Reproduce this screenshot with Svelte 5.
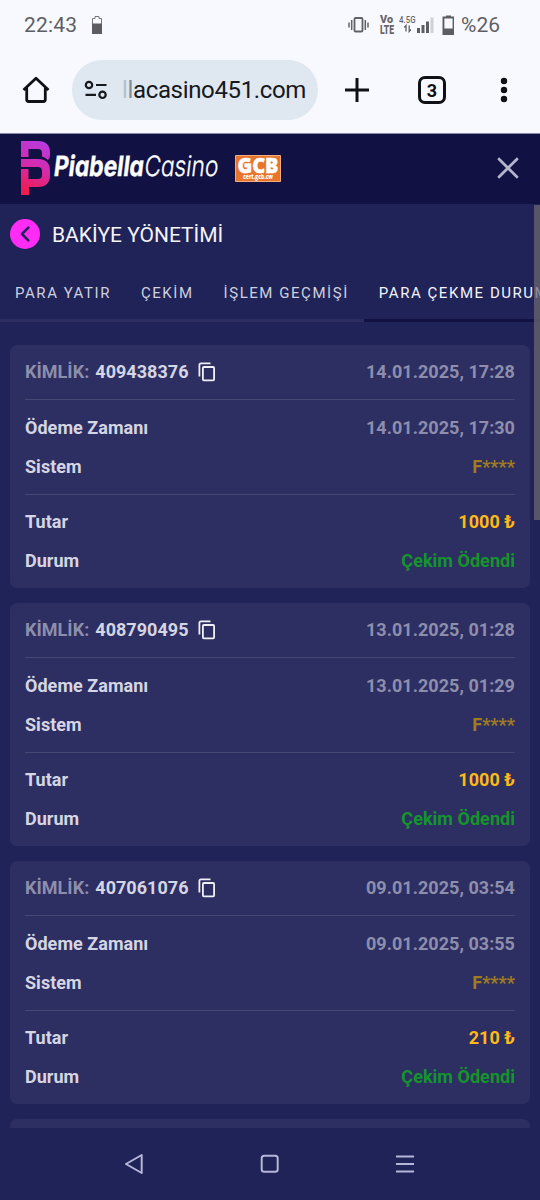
<script lang="ts">
  interface Tab {
    id: string;
    label: string;
  }

  interface Withdrawal {
    id: string;
    createdAt: string;
    paidAt: string;
    system: string;
    amount: string;
    status: string;
  }

  const tabs: Tab[] = [
    { id: 'deposit', label: 'PARA YATIR' },
    { id: 'withdraw', label: 'ÇEKİM' },
    { id: 'history', label: 'İŞLEM GEÇMİŞİ' },
    { id: 'status', label: 'PARA ÇEKME DURUMU' },
  ];

  const withdrawals: Withdrawal[] = [
    { id: '409438376', createdAt: '14.01.2025, 17:28', paidAt: '14.01.2025, 17:30', system: 'F****', amount: '1000 ₺', status: 'Çekim Ödendi' },
    { id: '408790495', createdAt: '13.01.2025, 01:28', paidAt: '13.01.2025, 01:29', system: 'F****', amount: '1000 ₺', status: 'Çekim Ödendi' },
    { id: '407061076', createdAt: '09.01.2025, 03:54', paidAt: '09.01.2025, 03:55', system: 'F****', amount: '210 ₺', status: 'Çekim Ödendi' },
  ];

  let activeTab = $state('status');
</script>

<div class="phone">
  <div class="status-bar">
    <span class="clock">22:43</span>
    <svg class="battery-left" width="12" height="20" viewBox="0 0 12 20">
      <path d="M1.500 3.500h2.500v-2h4v2h2.500v15h-9z" fill="none" stroke="#77777b" />
      <path d="M1 8.500h10V19H1z" fill="#5d5d61" />
    </svg>
    <svg class="signals" width="110" height="24" viewBox="0 0 110 24">
      <g fill="none" stroke="#626266" stroke-width="1.500">
        <rect x="10.500" y="5" width="8" height="13.500" rx="1" stroke-width="1.800" />
        <path d="M7.700 7v10M5 9.500v5M21.300 7v10M24 9.500v5" />
      </g>
      <g fill="#66666a" font-family="Roboto, sans-serif">
        <text x="36" y="10" font-size="11" font-weight="900" textLength="13" lengthAdjust="spacingAndGlyphs">Vo</text>
        <text x="36" y="20.500" font-size="12" font-weight="900" textLength="14" lengthAdjust="spacingAndGlyphs">LTE</text>
        <text x="55" y="9.800" font-size="8.500" font-weight="500" textLength="16.500" lengthAdjust="spacingAndGlyphs">4.5G</text>
      </g>
      <path d="M62 18.500v-6l-1.700 2M65.200 12.500v6l1.700-2" fill="none" stroke="#626266" stroke-width="1.300" />
      <g fill="#5d5d61">
        <path d="M73 15h3v5h-3zM77.500 12h3v8h-3zM82 8.500h3V20h-3z" />
        <path d="M86.500 4.500h3V20h-3z" fill="#cfcfd4" />
        <path d="M98.500 3.500h3.500V2.500h5v1h3.500V22h-12zM100.400 5.500v10h8.200v-10z" fill-rule="evenodd" />
      </g>
    </svg>
    <span class="percent">%26</span>
  </div>

  <div class="browser-bar">
    <svg class="home" width="30" height="30" viewBox="0 0 30 30" fill="none" stroke="#101114" stroke-width="2.800" stroke-linejoin="round">
      <path d="M2.500 15 15 3.300 27.500 15M5.700 12.500v12q0 2 2 2h14.600q2 0 2-2v-12" />
    </svg>
    <div class="url">
      <svg width="24" height="20" viewBox="0 0 24 20" fill="none" stroke="#16191d" stroke-width="2.200">
        <circle cx="5" cy="5" r="3.200" />
        <circle cx="18.500" cy="14.800" r="3.200" />
        <path d="M12 5h10.500M1.500 14.800H12" />
      </svg>
      <span class="address"><span class="faded">l</span><span class="half">l</span>acasino451.com</span>
    </div>
    <svg class="plus" width="26" height="26" viewBox="0 0 26 26" stroke="#101114" stroke-width="3">
      <path d="M1 13h24M13 1v24" />
    </svg>
    <div class="tab-count">3</div>
    <svg class="dots" width="8" height="26" viewBox="0 0 8 26" fill="#101114">
      <circle cx="4" cy="4" r="3.200" /><circle cx="4" cy="13" r="3.200" /><circle cx="4" cy="22" r="3.200" />
    </svg>
  </div>

  <header class="site-header">
    <svg class="logo" width="200" height="56" viewBox="0 0 200 56">
      <defs>
        <linearGradient id="brand" gradientUnits="userSpaceOnUse" x1="26" y1="2" x2="6" y2="50">
          <stop offset="0" stop-color="#b83be0" />
          <stop offset="0.500" stop-color="#d42bae" />
          <stop offset="1" stop-color="#ee1c50" />
        </linearGradient>
      </defs>
      <g fill="url(#brand)">
        <path d="M1 0h17q12 0 12 12v2q0 3-2 5-3-3-6-3.500V12q0-4-4-4H8.500v8H1z" />
        <path d="M1 18h17q12 0 12 12v4q0 12-12 12H9v8H1V28h7.500v10H18q4 0 4-4v-4q0-4-4-4H1z" />
      </g>
      <g class="wordmark" fill="#fff" stroke="#fff" transform="translate(0 34.500) skewX(-7)">
        <text x="33" y="0" font-size="28" font-weight="700" stroke-width=".4" textLength="90" lengthAdjust="spacingAndGlyphs">Piabella</text>
        <text x="123.500" y="0.500" font-size="28" font-weight="300" stroke-width=".3" textLength="74" lengthAdjust="spacingAndGlyphs">Casino</text>
      </g>
    </svg>
    <svg class="gcb" width="46" height="27" viewBox="0 0 46 27">
      <path d="M.5.500h45v26H.5z" fill="#e8752b" stroke="#f0ad82" />
      <g fill="#fff" font-family="'Open Sans', sans-serif" font-weight="800">
        <text x="2.500" y="18" font-size="20.500" stroke="#fff" stroke-width=".5" textLength="41" lengthAdjust="spacingAndGlyphs">GCB</text>
        <text x="8" y="24.300" font-size="6" textLength="30" lengthAdjust="spacingAndGlyphs">cert.gcb.cw</text>
      </g>
    </svg>
    <svg class="close" width="22" height="22" viewBox="0 0 22 22" stroke="#b4b4cc" stroke-width="2.700">
      <path d="M1.200 1.200l19.600 19.600M20.800 1.200L1.200 20.800" />
    </svg>
  </header>

  <main class="content">
    <div class="page-title">
      <span class="back">
        <svg width="10" height="16" viewBox="0 0 10 16" fill="none" stroke="#22245c" stroke-width="2.600" stroke-linecap="round" stroke-linejoin="round">
          <path d="M8.300 1.700 2 8l6.300 6.300" />
        </svg>
      </span>
      <h1>BAKİYE YÖNETİMİ</h1>
    </div>

    <div class="tabs" role="tablist">
      {#each tabs as tab}
        <button
          type="button"
          role="tab"
          class="tab"
          class:active={activeTab === tab.id}
          aria-selected={activeTab === tab.id}
          onclick={() => (activeTab = tab.id)}
        >
          {tab.label}
        </button>
      {/each}
    </div>

    <div class="cards">
      {#each withdrawals as item}
        <article class="card">
          <div class="card-head">
            <span class="muted">KİMLİK:</span>
            <span class="card-id">{item.id}</span>
            <svg width="18" height="20" viewBox="0 0 18 20" fill="none" stroke="#f0f0f8" stroke-width="1.800">
              <path d="M1.400 14.500V3Q1.400 1.400 3 1.400h9.500" />
              <rect x="4.900" y="5" width="11.200" height="13.300" rx="1" />
            </svg>
            <span class="muted date">{item.createdAt}</span>
          </div>
          <div class="group">
            <div class="row"><span>Ödeme Zamanı</span><span class="muted">{item.paidAt}</span></div>
            <div class="row"><span>Sistem</span><span class="system">{item.system}</span></div>
          </div>
          <div class="group">
            <div class="row"><span>Tutar</span><span class="amount">{item.amount}</span></div>
            <div class="row"><span>Durum</span><span class="paid">{item.status}</span></div>
          </div>
        </article>
      {/each}
      <article class="card next"></article>
    </div>
    <div class="scrollbar"></div>
  </main>

  <nav class="nav-bar">
    <svg width="20" height="22" viewBox="0 0 20 22"><path d="M17.700 2v18L2 11z" /></svg>
    <svg width="20" height="20" viewBox="0 0 20 20"><rect x="1.700" y="1.700" width="16" height="16" rx="2.500" /></svg>
    <svg width="20" height="20" viewBox="0 0 20 20"><path d="M1 2.500h18M1 10h18M1 17.500h18" /></svg>
  </nav>
</div>

<style>
  :global(body) {
    background: #202357;
  }

  .phone {
    display: flex;
    flex-direction: column;
    width: 540px;
    height: 1200px;
    overflow: hidden;
    background: #202357;
    font-family: Roboto, sans-serif;
  }

  /* Android status bar */
  .status-bar {
    display: flex;
    align-items: center;
    height: 50px;
    box-sizing: border-box;
    padding: 0 40px 0 24px;
    background: #f8f9ff;
    color: #5f5f63;
    font-size: 21px;
  }

  .clock {
    width: 67px;
    letter-spacing: 0.2px;
  }

  .signals {
    margin-left: auto;
    margin-right: 7px;
  }

  /* Chrome toolbar */
  .browser-bar {
    display: flex;
    align-items: center;
    height: 84px;
    box-sizing: border-box;
    padding: 0 32px 3px 21px;
    background: #f8f9ff;
    border-bottom: 1px solid #8b8ca6;
  }

  .url {
    display: flex;
    align-items: center;
    width: 246px;
    height: 60px;
    box-sizing: border-box;
    margin-left: 21px;
    padding-left: 12px;
    border-radius: 30px;
    background: #dfe7f0;
  }

  .address {
    margin-left: 14px;
    color: #16191d;
    font-size: 24px;
    letter-spacing: -0.35px;
    white-space: nowrap;
  }

  .faded {
    color: #b9c0c8;
  }

  .half {
    color: #858c94;
  }

  .plus {
    margin-left: 26px;
  }

  .tab-count {
    display: flex;
    align-items: center;
    justify-content: center;
    width: 28px;
    height: 28px;
    box-sizing: border-box;
    margin-left: 48px;
    border: 3px solid #101114;
    border-radius: 7px;
    color: #101114;
    font-size: 18px;
    font-weight: 700;
  }

  .dots {
    margin-left: auto;
  }

  /* Site header */
  .site-header {
    display: flex;
    align-items: center;
    height: 70px;
    box-sizing: border-box;
    padding: 0 21px 0 20px;
    background: #111143;
  }

  /* cv11 is Inter's single-storey a */
  .wordmark {
    font-family: Inter, sans-serif;
    font-feature-settings: 'cv11';
  }

  .gcb {
    margin-left: 15px;
    margin-bottom: 1px;
  }

  .close {
    margin-left: auto;
    margin-bottom: 2px;
  }

  /* Page content */
  .content {
    position: relative;
    height: 924px;
    overflow: hidden;
  }

  .page-title {
    display: flex;
    align-items: center;
    height: 60px;
    padding-left: 10px;
  }

  .back {
    display: flex;
    align-items: center;
    justify-content: center;
    width: 30px;
    height: 30px;
    box-sizing: border-box;
    padding-right: 1px;
    border-radius: 50%;
    background: #ff2cf6;
  }

  h1 {
    margin: 1px 0 0 12px;
    color: #f4f4fa;
    font-size: 21px;
    font-weight: 400;
  }

  .tabs {
    display: flex;
    height: 58px;
  }

  .tab {
    flex: none;
    padding: 2px 15px 0;
    border: none;
    border-bottom: 3px solid #2c2e62;
    background: transparent;
    color: #cfd0de;
    font-family: inherit;
    font-size: 15px;
    letter-spacing: 1.55px;
    white-space: nowrap;
  }

  .tab.active {
    color: #f4f4fa;
    border-bottom-color: #111143;
  }

  /* Withdrawal cards */
  .cards {
    display: flex;
    flex-direction: column;
    gap: 15px;
    padding: 23px 10px 0;
  }

  .card {
    height: 243px;
    flex: none;
    box-sizing: border-box;
    padding: 0 15px;
    border-radius: 7px;
    background: #2d2f62;
    color: #d5d5e3;
    font-size: 18px;
    font-weight: 700;
    letter-spacing: 0.04px;
  }

  .card-head {
    display: flex;
    align-items: center;
    height: 55px;
    box-sizing: border-box;
    padding-bottom: 1px;
    border-bottom: 1px solid #464872;
  }

  .card-id {
    margin: 0 9px 0 6px;
  }

  .date {
    margin-left: auto;
  }

  .muted {
    color: #8d8eac;
  }

  .group {
    padding: 8px 0;
  }

  .group + .group {
    padding-top: 7px;
    border-top: 1px solid #464872;
  }

  .row {
    display: flex;
    align-items: center;
    justify-content: space-between;
    height: 39px;
  }

  .system {
    color: #a07c1e;
  }

  .amount {
    color: #fdb916;
  }

  .paid {
    color: #15942d;
  }

  .scrollbar {
    position: absolute;
    top: 1px;
    right: 0;
    width: 6px;
    height: 315px;
    background: rgba(105, 103, 115, 0.75);
  }

  /* Android navigation */
  .nav-bar {
    display: flex;
    align-items: center;
    justify-content: space-between;
    height: 72px;
    padding: 0 125px 0 124px;
  }

  .nav-bar svg {
    fill: none;
    stroke: #b6b6d8;
    stroke-width: 2;
    stroke-linejoin: round;
  }
</style>
